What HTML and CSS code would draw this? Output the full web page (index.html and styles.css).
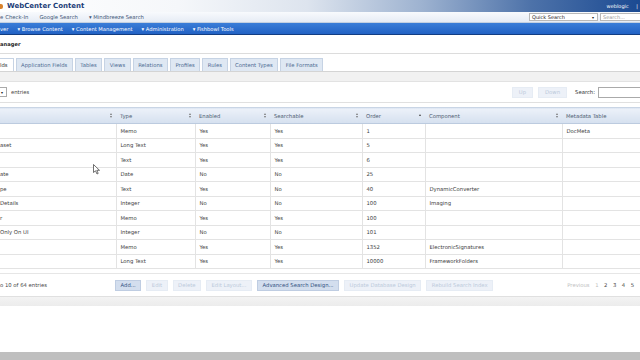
FILE: index.html
```html
<!DOCTYPE html>
<html>
<head>
    <title>WebCenter Content - Configuration Manager</title>
    <link rel="stylesheet" href="styles.css">
</head>
<body>
    <div class="page">
        <div class="masthead">
            <span class="logo-mark"></span>
            <span class="brand">WebCenter Content</span>
            <span class="user">weblogic <span class="sep">|</span></span>
        </div>

        <div class="linkbar">
            <div class="links">
                <span class="cut">e</span>
                <span>Check-In</span>
                <span>Google Search</span>
                <span>&#9662; Mindbreeze Search</span>
            </div>
            <div class="quick">
                <div class="qselect">Quick Search <span class="caret">&#9662;</span></div>
                <div class="qinput">Search...</div>
            </div>
        </div>

        <div class="navbar">
            <span>ver</span>
            <span>&#9662; Browse Content</span>
            <span>&#9662; Content Management</span>
            <span>&#9662; Administration</span>
            <span>&#9662; Fishbowl Tools</span>
        </div>

        <div class="title">anager</div>

        <div class="tabs">
            <span class="tab active">lds</span>
            <span class="tab">Application Fields</span>
            <span class="tab">Tables</span>
            <span class="tab">Views</span>
            <span class="tab">Relations</span>
            <span class="tab">Profiles</span>
            <span class="tab">Rules</span>
            <span class="tab">Content Types</span>
            <span class="tab">File Formats</span>
        </div>
        <div class="band"></div>

        <div class="toolbar">
            <div class="length">
                <span class="lselect">&#9662;</span>
                <span>entries</span>
            </div>
            <div class="tools">
                <span class="btn off">Up</span>
                <span class="btn off">Down</span>
                <span class="search-label">Search:</span>
                <span class="search-box"></span>
            </div>
        </div>

        <table class="grid">
            <colgroup>
                <col style="width:116px">
                <col style="width:79px">
                <col style="width:75px">
                <col style="width:92px">
                <col style="width:63px">
                <col style="width:137px">
                <col style="width:84px">
            </colgroup>
            <thead>
                <tr>
                    <th class="first"><span class="sort"></span></th>
                    <th>Type<span class="sort"></span></th>
                    <th>Enabled<span class="sort"></span></th>
                    <th>Searchable<span class="sort"></span></th>
                    <th>Order<span class="sort asc"></span></th>
                    <th>Component<span class="sort"></span></th>
                    <th>Metadata Table</th>
                </tr>
            </thead>
            <tbody id="rows"></tbody>
        </table>

        <div class="footer">
            <span class="info">o 10 of 64 entries</span>
            <div class="actions">
                <span class="btn on">Add...</span>
                <span class="btn off">Edit</span>
                <span class="btn off">Delete</span>
                <span class="btn off">Edit Layout...</span>
                <span class="btn on">Advanced Search Design...</span>
                <span class="btn off">Update Database Design</span>
                <span class="btn off">Rebuild Search Index</span>
            </div>
            <div class="pager">
                <span class="prev">Previous</span>
                <span class="cur">1</span>
                <span>2</span>
                <span>3</span>
                <span>4</span>
                <span>5</span>
            </div>
        </div>
        <div class="band2"></div>
        <div class="blank"></div>
        <div class="bottom"></div>

        <svg class="cursor" width="8" height="11" viewBox="0 0 8 11">
            <path d="M0.5 0.5 L0.5 8.5 L2.5 6.8 L4 10 L5.2 9.4 L3.8 6.3 L6.5 6.3 Z" fill="#fff" stroke="#333" stroke-width="0.7"/>
        </svg>
    </div>

    <script>
        const fields = [
            ["", "Memo", "Yes", "Yes", "1", "", "DocMeta"],
            ["aset", "Long Text", "Yes", "Yes", "5", "", ""],
            ["", "Text", "Yes", "Yes", "6", "", ""],
            ["ate", "Date", "No", "No", "25", "", ""],
            ["pe", "Text", "Yes", "No", "40", "DynamicConverter", ""],
            ["Details", "Integer", "No", "No", "100", "Imaging", ""],
            ["r", "Memo", "Yes", "Yes", "100", "", ""],
            ["Only On UI", "Integer", "No", "No", "101", "", ""],
            ["", "Memo", "Yes", "Yes", "1352", "ElectronicSignatures", ""],
            ["", "Long Text", "Yes", "Yes", "10000", "FrameworkFolders", ""]
        ];

        let html = "";
        fields.forEach(row => {
            html += "<tr>" + row.map((cell, i) => `<td${i === 0 ? ' class="first"' : ''}>${cell}</td>`).join("") + "</tr>";
        });
        document.getElementById("rows").innerHTML = html;
    </script>
</body>
</html>
```

FILE: styles.css
```css
html, body { margin: 0; padding: 0; background: #fff; }
body { font-family: "DejaVu Sans", Verdana, sans-serif; font-size: 5.3px; color: #3a3a3a; }
.page { position: relative; width: 640px; height: 360px; overflow: hidden; }

.masthead { height: 12px; display: flex; align-items: center; background: linear-gradient(90deg, #ffffff 0%, #f5f7fa 28%, #dde4ee 48%, #9db2d0 66%, #4d72a9 83%, #1b4a92 100%); }
.logo-mark { width: 3px; height: 5px; background: #d9822b; border-radius: 0 2px 2px 0; }
.brand { margin-left: 4px; font-size: 7px; font-weight: bold; color: #1b3d78; }
.user { margin-left: auto; margin-right: 2px; color: #fff; font-size: 5px; }
.user .sep { margin-left: 6px; }

.linkbar { height: 11px; display: flex; align-items: center; justify-content: space-between; background: linear-gradient(#f8fafd, #e6ecf5); border-bottom: 1px solid #c3d0e1; box-sizing: border-box; }
.links { display: flex; gap: 11px; color: #3e5576; }
.links .cut { margin-right: -9px; }
.quick { display: flex; gap: 2px; align-items: center; }
.qselect { width: 69px; height: 8px; box-sizing: border-box; border: 1px solid #b8b8b8; background: #fff; color: #222; display: flex; align-items: center; padding-left: 2px; font-size: 5px; }
.qselect .caret { margin-left: auto; margin-right: 3px; font-size: 4px; }
.qinput { width: 40px; height: 8px; box-sizing: border-box; border: 1px solid #b8b8b8; border-right: none; background: #fff; color: #999; font-size: 5px; padding-left: 2px; display: flex; align-items: center; }

.navbar { height: 12px; display: flex; align-items: center; gap: 9px; background: linear-gradient(#3a7dd8, #2262c4); border-bottom: 1px solid #123d82; box-sizing: border-box; color: #fff; font-size: 5.2px; }

.title { height: 19px; line-height: 19px; font-weight: bold; color: #222; font-size: 5.2px; border-bottom: 1px solid #dcdcdc; box-sizing: border-box; }

.tabs { margin-top: 4px; height: 13px; display: flex; gap: 2px; }
.tab { height: 13px; box-sizing: border-box; padding: 0 4.5px; display: flex; align-items: center; background: #dfe8f3; border: 1px solid #c6d3e4; border-bottom: none; color: #4c6a92; }
.tab.active { background: #fff; color: #333; padding-left: 0; border-left: none; padding-right: 5px; }
.band { height: 9px; background: #f1f1f1; border-top: 1px solid #d4d4d4; border-bottom: 1px solid #e2e2e2; }

.toolbar { height: 21px; display: flex; align-items: center; justify-content: space-between; border-bottom: 1px solid #e0e0e0; box-sizing: border-box; }
.length { display: flex; align-items: center; gap: 4px; color: #444; }
.lselect { width: 7px; height: 10px; box-sizing: border-box; border: 1px solid #aaa; border-left: none; background: #fff; font-size: 4px; display: flex; align-items: center; padding-left: 1px; color: #222; }
.tools { display: flex; align-items: center; }
.tools .btn { margin-right: 5px; padding: 0 6px; }
.search-label { margin-left: 3px; color: #333; }
.search-box { width: 42px; height: 11px; margin-left: 3px; box-sizing: border-box; border: 1px solid #aaa; border-right: none; background: #fff; }

.btn { height: 11px; box-sizing: border-box; padding: 0 4.5px; display: inline-flex; align-items: center; border: 1px solid #d4deeb; }
.btn.on { background: #d3deee; color: #2f4f7e; border-color: #bfcde2; }
.btn.off { background: #edf1f8; color: #bccadb; border-color: #e6ecf4; }

.grid { margin-top: 4px; width: 646px; table-layout: fixed; border-collapse: collapse; }
.grid th { height: 15px; padding: 0 0 0 4px; text-align: left; font-weight: normal; color: #4c5b70; background: linear-gradient(#ecf1f9, #d5e0ef); border-top: 1px solid #c9d5e5; border-bottom: 1px solid #bccbdf; position: relative; white-space: nowrap; }
.grid td { height: 14.5px; padding: 0 0 0 4px; border-bottom: 1px solid #e3e3e3; border-left: 1px solid #e3e3e3; color: #3c3c3c; white-space: nowrap; box-sizing: border-box; }
.grid .first { padding-left: 0; border-left: none; }
.sort { position: absolute; right: 3px; top: 5px; width: 3px; height: 5px; }
.sort::before, .sort::after { content: ""; position: absolute; left: 0; border-left: 1.5px solid transparent; border-right: 1.5px solid transparent; }
.sort::before { top: 0; border-bottom: 2px solid #777; }
.sort::after { bottom: 0; border-top: 2px solid #777; }
.sort.asc::after { display: none; }
.sort.asc::before { top: 1px; border-bottom-color: #444; }

.footer { margin-top: 4px; height: 23px; display: flex; align-items: center; border-top: 1px solid #e6e6e6; box-sizing: border-box; }
.info { width: 115px; color: #444; }
.actions { display: flex; gap: 5px; }
.pager { margin-left: auto; display: flex; gap: 5.5px; color: #444; margin-right: 6px; }
.pager .prev { color: #c0c0c0; }
.pager .cur { color: #bbb; }

.band2 { height: 10px; background: linear-gradient(#f3f3f3, #ececec); border-top: 1px solid #e0e0e0; box-sizing: border-box; }
.blank { height: 46px; background: #fff; }
.bottom { height: 10px; background: #bfbfbf; }

.cursor { position: absolute; left: 93px; top: 164px; }
```
